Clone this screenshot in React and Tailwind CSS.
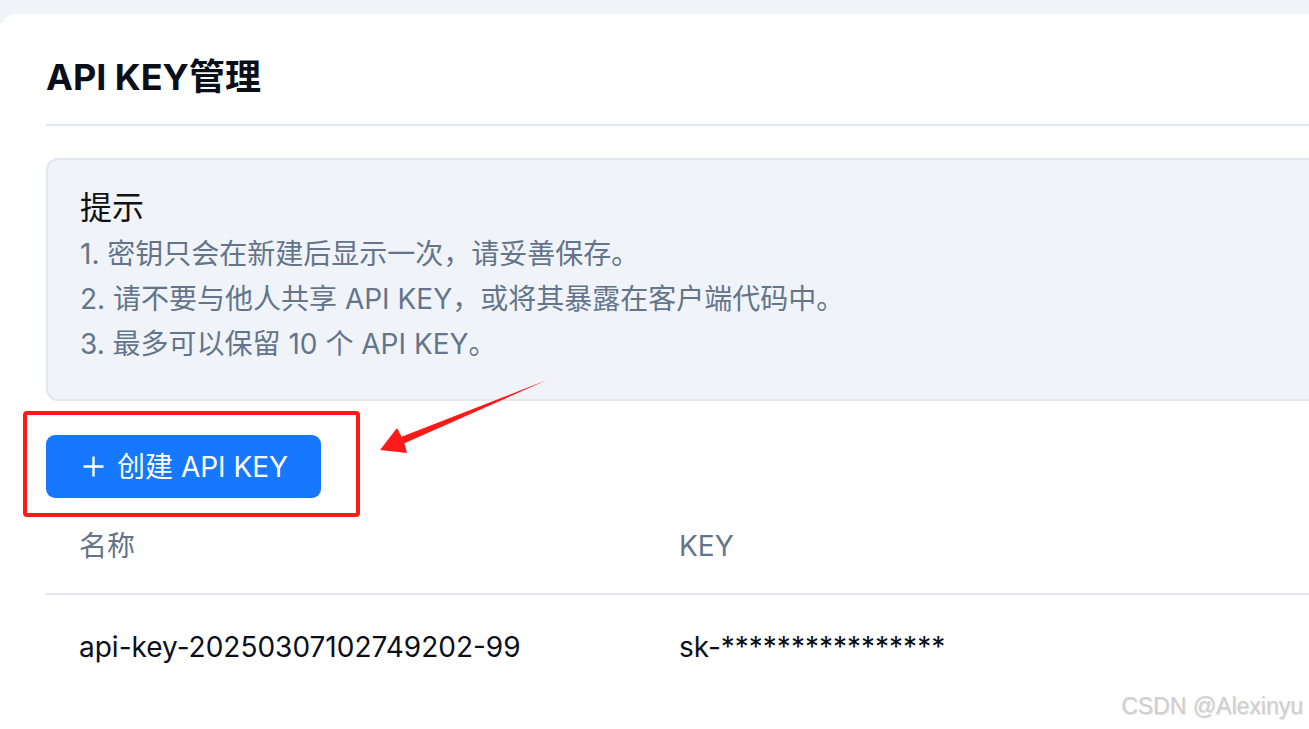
import React from "react";

export default function App() {
  return (
    <div className="relative h-[729px] w-[1309px] overflow-hidden bg-[#f1f4f9] pt-[14px] font-['Inter','Noto_Sans_CJK_SC',sans-serif]">
      <div className="h-full w-[1400px] rounded-tl-[16px] bg-white pl-[46px] pr-[46px]">
        <div className="border-b-2 border-[#e2e8f0] pt-[41px] pb-[25px]">
          <h1 className="text-[36px] font-bold leading-[44px] text-[#0b0f19]">API KEY管理</h1>
        </div>

        <div className="mt-[32px] rounded-[12px] border-2 border-[#e3e8ef] bg-[#f0f4f9] pl-[32px] pt-[24px] pb-[32px]">
          <div className="text-[32px] leading-[48px] text-[#111111]">提示</div>
          <div className="text-[28px] leading-[45px] text-[#64748b]">
            <p>1. 密钥只会在新建后显示一次，请妥善保存。</p>
            <p>2. 请不要与他人共享 API KEY，或将其暴露在客户端代码中。</p>
            <p>3. 最多可以保留 10 个 API KEY。</p>
          </div>
        </div>

        <div className="relative mt-[34px]">
          <button className="flex h-[63px] w-[275px] items-center gap-[13px] rounded-[9px] bg-[#1677ff] pl-[37px] text-[28px] text-white">
            <svg width="21" height="21" viewBox="0 0 21 21" fill="none" stroke="white" strokeWidth="2.4" strokeLinecap="butt">
              <path d="M10.5 0.5V20.5M0.5 10.5H20.5" />
            </svg>
            <span>创建 API KEY</span>
          </button>
          <div className="absolute left-[-23px] top-[-24px] h-[106px] w-[337px] rounded-[4px] border-[4px] border-[#ff1a1a]" />
        </div>

        <div className="grid grid-cols-[600px_1fr] text-[28px]">
          <div className="flex h-[97px] items-center border-b-2 border-[#e2e8f0] px-[33px] text-[#64748b]">名称</div>
          <div className="flex h-[97px] items-center border-b-2 border-[#e2e8f0] px-[33px] text-[#64748b]">KEY</div>
          <div className="flex h-[104px] items-center px-[33px] text-[#0b0f19]">api-key-20250307102749202-99</div>
          <div className="flex h-[104px] items-center px-[33px] text-[#0b0f19]">sk-****************</div>
        </div>
      </div>

      <svg className="pointer-events-none absolute left-0 top-0" width="1309" height="729">
        <polygon
          points="547,380 404.4,443.2 407,453 380,450 397,428 401.6,436.8"
          fill="#ff1a1a"
        />
      </svg>

      <div className="absolute right-[6px] top-[695px] font-['Liberation_Sans',Arial,sans-serif] text-[23px] leading-none text-[#cfcfcf] [text-shadow:1px_1px_1px_rgba(0,0,0,0.12)]">
        CSDN @Alexinyu
      </div>
    </div>
  );
}
